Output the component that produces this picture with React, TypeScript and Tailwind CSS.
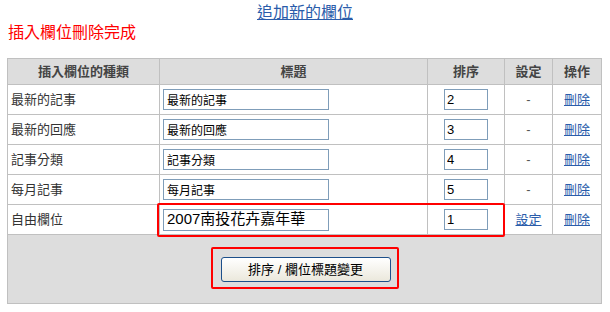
import React from "react";

const font = { fontFamily: '"Liberation Sans", "Noto Sans CJK TC", sans-serif' };

const rows = [
  { type: "最新的記事", title: "最新的記事", order: "2", setting: false },
  { type: "最新的回應", title: "最新的回應", order: "3", setting: false },
  { type: "記事分類", title: "記事分類", order: "4", setting: false },
  { type: "每月記事", title: "每月記事", order: "5", setting: false },
];

const cell = "border-r border-b border-[#c0c0c0] h-[30px] flex items-center";
const head =
  "border-r border-b border-[#c0c0c0] h-[26px] bg-[#dddddd] flex items-center justify-center text-[13px] font-bold text-[#444444]";

export default function App() {
  return (
    <div className="w-[610px] h-[312px] bg-white text-[#333333]" style={font}>
      <div className="pt-[3px] text-center text-[16px] leading-[20px]">
        <a href="#" className="text-[#2a5caa] underline">追加新的欄位</a>
      </div>
      <div className="pl-[8px] text-[16px] leading-[20px] text-[#ff0000]">插入欄位刪除完成</div>
      <div className="relative ml-[7px] mt-[15px] w-[595px]">
        <div className="grid grid-cols-[152px_268px_77px_48px_49px] border-l border-t border-[#c0c0c0]">
          <div className={head}>插入欄位的種類</div>
          <div className={head}>標題</div>
          <div className={head}>排序</div>
          <div className={head}>設定</div>
          <div className={head}>操作</div>
          {rows.map((r) => (
            <React.Fragment key={r.type}>
              <div className={cell + " pl-[3px] text-[13px]"}>{r.type}</div>
              <div className={cell + " pl-[3px]"}>
                <input
                  readOnly
                  value={r.title}
                  className="w-[166px] h-[21px] border border-[#7f9db9] px-[3px] text-[12px] text-black outline-none"
                  style={font}
                />
              </div>
              <div className={cell + " justify-center"}>
                <input
                  readOnly
                  value={r.order}
                  className="w-[44px] h-[21px] border border-[#7f9db9] px-[2px] text-[13px] text-black outline-none"
                  style={font}
                />
              </div>
              <div className={cell + " justify-center text-[13px] text-[#555555]"}>-</div>
              <div className={cell + " justify-center"}>
                <a href="#" className="text-[13px] text-[#2a5caa] underline">刪除</a>
              </div>
            </React.Fragment>
          ))}
          <div className={cell + " pl-[3px] text-[13px]"}>自由欄位</div>
          <div className={cell + " pl-[3px]"}>
            <input
              readOnly
              value="2007南投花卉嘉年華"
              className="w-[166px] h-[22px] border border-[#7f9db9] px-[3px] text-[15px] text-black outline-none"
              style={font}
            />
          </div>
          <div className={cell + " justify-center"}>
            <input
              readOnly
              value="1"
              className="w-[44px] h-[21px] border border-[#7f9db9] px-[2px] text-[13px] text-black outline-none"
              style={font}
            />
          </div>
          <div className={cell + " justify-center"}>
            <a href="#" className="text-[13px] text-[#2a5caa] underline">設定</a>
          </div>
          <div className={cell + " justify-center"}>
            <a href="#" className="text-[13px] text-[#2a5caa] underline">刪除</a>
          </div>
        </div>
        <div className="border-l border-r border-b border-[#c0c0c0] bg-[#dddddd] h-[69px] flex justify-center pt-[12px]">
          <div className="w-[188px] h-[42px] border-2 border-[#ff0000] rounded-[2px] pl-[8px] pt-[8px]">
            <button
              className="w-[170px] h-[25px] border border-[#1c4f8a] rounded-[3px] bg-gradient-to-b from-white to-[#ebe8dc] text-[13px] text-black"
              style={font}
            >
              排序 / 欄位標題變更
            </button>
          </div>
        </div>
        <div className="absolute left-[150px] top-[145px] w-[348px] h-[34px] border-2 border-[#ff0000] rounded-[2px] pointer-events-none" />
      </div>
    </div>
  );
}
